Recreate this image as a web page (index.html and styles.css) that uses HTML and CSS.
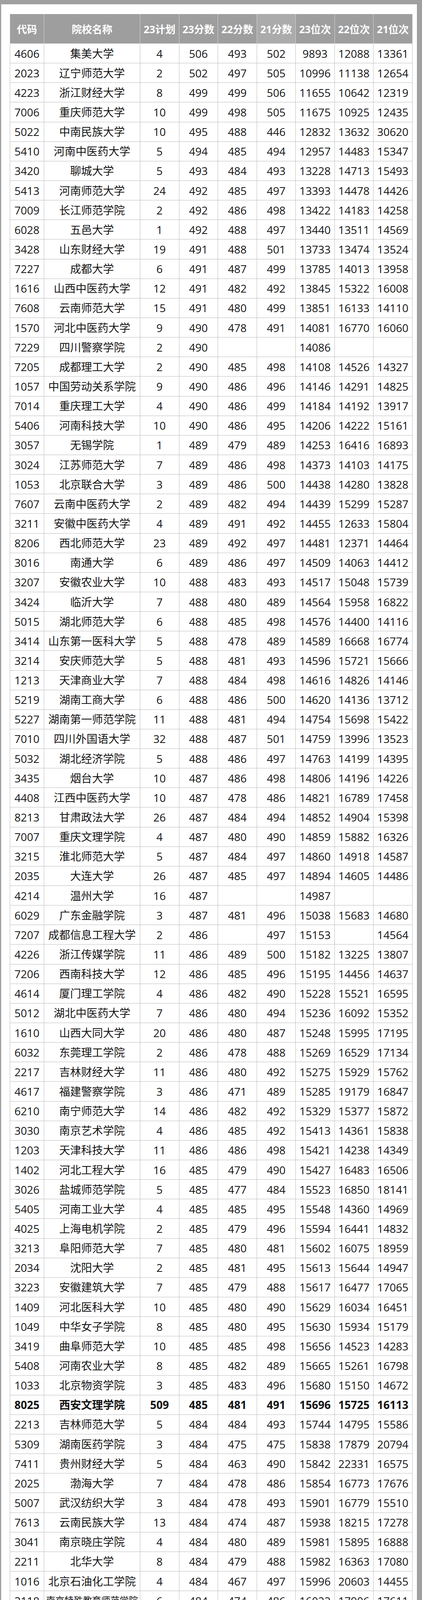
FILE: index.html
```html
<!DOCTYPE html>
<html lang="zh-CN">
<head>
<meta charset="utf-8">
<title>院校分数位次</title>
<link rel="stylesheet" href="styles.css">
</head>
<body>
<div class="sheet">
<table class="rank">
<colgroup>
<col class="c-code"><col class="c-name"><col class="c-num"><col class="c-num"><col class="c-num"><col class="c-num"><col class="c-num"><col class="c-num"><col class="c-num">
</colgroup>
<thead>
<tr><th>代码</th><th>院校名称</th><th>23计划</th><th>23分数</th><th>22分数</th><th class="alt">21分数</th><th>23位次</th><th>22位次</th><th>21位次</th></tr>
</thead>
<tbody>
<tr><td>4606</td><td>集美大学</td><td>4</td><td>506</td><td>493</td><td>502</td><td>9893</td><td>12088</td><td>13361</td></tr>
<tr><td>2023</td><td>辽宁师范大学</td><td>2</td><td>502</td><td>497</td><td>505</td><td>10996</td><td>11138</td><td>12654</td></tr>
<tr><td>4223</td><td>浙江财经大学</td><td>8</td><td>499</td><td>499</td><td>506</td><td>11655</td><td>10642</td><td>12319</td></tr>
<tr><td>7006</td><td>重庆师范大学</td><td>10</td><td>499</td><td>498</td><td>505</td><td>11675</td><td>10925</td><td>12435</td></tr>
<tr><td>5022</td><td>中南民族大学</td><td>10</td><td>495</td><td>488</td><td>446</td><td>12832</td><td>13632</td><td>30620</td></tr>
<tr><td>5410</td><td>河南中医药大学</td><td>5</td><td>494</td><td>485</td><td>494</td><td>12957</td><td>14483</td><td>15347</td></tr>
<tr><td>3420</td><td>聊城大学</td><td>5</td><td>493</td><td>484</td><td>493</td><td>13228</td><td>14713</td><td>15493</td></tr>
<tr><td>5413</td><td>河南师范大学</td><td>24</td><td>492</td><td>485</td><td>497</td><td>13393</td><td>14478</td><td>14426</td></tr>
<tr><td>7009</td><td>长江师范学院</td><td>2</td><td>492</td><td>486</td><td>498</td><td>13422</td><td>14183</td><td>14258</td></tr>
<tr><td>6028</td><td>五邑大学</td><td>1</td><td>492</td><td>488</td><td>497</td><td>13440</td><td>13511</td><td>14569</td></tr>
<tr><td>3428</td><td>山东财经大学</td><td>19</td><td>491</td><td>488</td><td>501</td><td>13733</td><td>13474</td><td>13524</td></tr>
<tr><td>7227</td><td>成都大学</td><td>6</td><td>491</td><td>487</td><td>499</td><td>13785</td><td>14013</td><td>13958</td></tr>
<tr><td>1616</td><td>山西中医药大学</td><td>12</td><td>491</td><td>482</td><td>492</td><td>13845</td><td>15322</td><td>16008</td></tr>
<tr><td>7608</td><td>云南师范大学</td><td>15</td><td>491</td><td>480</td><td>499</td><td>13851</td><td>16133</td><td>14110</td></tr>
<tr><td>1570</td><td>河北中医药大学</td><td>9</td><td>490</td><td>478</td><td>491</td><td>14081</td><td>16770</td><td>16060</td></tr>
<tr><td>7229</td><td>四川警察学院</td><td>2</td><td>490</td><td></td><td></td><td>14086</td><td></td><td></td></tr>
<tr><td>7205</td><td>成都理工大学</td><td>2</td><td>490</td><td>485</td><td>498</td><td>14108</td><td>14526</td><td>14327</td></tr>
<tr><td>1057</td><td>中国劳动关系学院</td><td>9</td><td>490</td><td>486</td><td>496</td><td>14146</td><td>14291</td><td>14825</td></tr>
<tr><td>7014</td><td>重庆理工大学</td><td>4</td><td>490</td><td>486</td><td>499</td><td>14184</td><td>14192</td><td>13917</td></tr>
<tr><td>5406</td><td>河南科技大学</td><td>10</td><td>490</td><td>486</td><td>495</td><td>14206</td><td>14222</td><td>15161</td></tr>
<tr><td>3057</td><td>无锡学院</td><td>1</td><td>489</td><td>479</td><td>489</td><td>14253</td><td>16416</td><td>16893</td></tr>
<tr><td>3024</td><td>江苏师范大学</td><td>7</td><td>489</td><td>486</td><td>498</td><td>14373</td><td>14103</td><td>14175</td></tr>
<tr><td>1053</td><td>北京联合大学</td><td>3</td><td>489</td><td>486</td><td>500</td><td>14438</td><td>14280</td><td>13828</td></tr>
<tr><td>7607</td><td>云南中医药大学</td><td>2</td><td>489</td><td>482</td><td>494</td><td>14439</td><td>15299</td><td>15287</td></tr>
<tr><td>3211</td><td>安徽中医药大学</td><td>4</td><td>489</td><td>491</td><td>492</td><td>14455</td><td>12633</td><td>15804</td></tr>
<tr><td>8206</td><td>西北师范大学</td><td>23</td><td>489</td><td>492</td><td>497</td><td>14481</td><td>12371</td><td>14464</td></tr>
<tr><td>3016</td><td>南通大学</td><td>6</td><td>489</td><td>486</td><td>497</td><td>14509</td><td>14063</td><td>14412</td></tr>
<tr><td>3207</td><td>安徽农业大学</td><td>10</td><td>488</td><td>483</td><td>493</td><td>14517</td><td>15048</td><td>15739</td></tr>
<tr><td>3424</td><td>临沂大学</td><td>7</td><td>488</td><td>480</td><td>489</td><td>14564</td><td>15958</td><td>16822</td></tr>
<tr><td>5015</td><td>湖北师范大学</td><td>6</td><td>488</td><td>485</td><td>498</td><td>14576</td><td>14400</td><td>14116</td></tr>
<tr><td>3414</td><td>山东第一医科大学</td><td>5</td><td>488</td><td>478</td><td>489</td><td>14589</td><td>16668</td><td>16774</td></tr>
<tr><td>3214</td><td>安庆师范大学</td><td>5</td><td>488</td><td>481</td><td>493</td><td>14596</td><td>15721</td><td>15666</td></tr>
<tr><td>1213</td><td>天津商业大学</td><td>7</td><td>488</td><td>484</td><td>498</td><td>14616</td><td>14826</td><td>14146</td></tr>
<tr><td>5219</td><td>湖南工商大学</td><td>6</td><td>488</td><td>486</td><td>500</td><td>14620</td><td>14136</td><td>13712</td></tr>
<tr><td>5227</td><td>湖南第一师范学院</td><td>11</td><td>488</td><td>481</td><td>494</td><td>14754</td><td>15698</td><td>15422</td></tr>
<tr><td>7010</td><td>四川外国语大学</td><td>32</td><td>488</td><td>487</td><td>501</td><td>14759</td><td>13996</td><td>13523</td></tr>
<tr><td>5032</td><td>湖北经济学院</td><td>5</td><td>488</td><td>486</td><td>497</td><td>14763</td><td>14199</td><td>14395</td></tr>
<tr><td>3435</td><td>烟台大学</td><td>10</td><td>487</td><td>486</td><td>498</td><td>14806</td><td>14196</td><td>14226</td></tr>
<tr><td>4408</td><td>江西中医药大学</td><td>10</td><td>487</td><td>478</td><td>486</td><td>14821</td><td>16789</td><td>17458</td></tr>
<tr><td>8213</td><td>甘肃政法大学</td><td>26</td><td>487</td><td>484</td><td>494</td><td>14852</td><td>14904</td><td>15398</td></tr>
<tr><td>7007</td><td>重庆文理学院</td><td>4</td><td>487</td><td>480</td><td>490</td><td>14859</td><td>15882</td><td>16326</td></tr>
<tr><td>3215</td><td>淮北师范大学</td><td>5</td><td>487</td><td>484</td><td>497</td><td>14860</td><td>14918</td><td>14587</td></tr>
<tr><td>2035</td><td>大连大学</td><td>26</td><td>487</td><td>485</td><td>497</td><td>14894</td><td>14605</td><td>14486</td></tr>
<tr><td>4214</td><td>温州大学</td><td>16</td><td>487</td><td></td><td></td><td>14987</td><td></td><td></td></tr>
<tr><td>6029</td><td>广东金融学院</td><td>3</td><td>487</td><td>481</td><td>496</td><td>15038</td><td>15683</td><td>14680</td></tr>
<tr><td>7207</td><td>成都信息工程大学</td><td>2</td><td>486</td><td></td><td>497</td><td>15153</td><td></td><td>14564</td></tr>
<tr><td>4226</td><td>浙江传媒学院</td><td>11</td><td>486</td><td>489</td><td>500</td><td>15182</td><td>13225</td><td>13807</td></tr>
<tr><td>7206</td><td>西南科技大学</td><td>12</td><td>486</td><td>485</td><td>496</td><td>15195</td><td>14456</td><td>14637</td></tr>
<tr><td>4614</td><td>厦门理工学院</td><td>4</td><td>486</td><td>482</td><td>490</td><td>15228</td><td>15521</td><td>16595</td></tr>
<tr><td>5012</td><td>湖北中医药大学</td><td>7</td><td>486</td><td>480</td><td>494</td><td>15236</td><td>16092</td><td>15352</td></tr>
<tr><td>1610</td><td>山西大同大学</td><td>20</td><td>486</td><td>480</td><td>487</td><td>15248</td><td>15995</td><td>17195</td></tr>
<tr><td>6032</td><td>东莞理工学院</td><td>2</td><td>486</td><td>478</td><td>488</td><td>15269</td><td>16529</td><td>17134</td></tr>
<tr><td>2217</td><td>吉林财经大学</td><td>11</td><td>486</td><td>480</td><td>492</td><td>15275</td><td>15929</td><td>15762</td></tr>
<tr><td>4617</td><td>福建警察学院</td><td>3</td><td>486</td><td>471</td><td>489</td><td>15285</td><td>19179</td><td>16847</td></tr>
<tr><td>6210</td><td>南宁师范大学</td><td>14</td><td>486</td><td>482</td><td>492</td><td>15329</td><td>15377</td><td>15872</td></tr>
<tr><td>3030</td><td>南京艺术学院</td><td>4</td><td>486</td><td>485</td><td>492</td><td>15413</td><td>14361</td><td>15838</td></tr>
<tr><td>1203</td><td>天津科技大学</td><td>11</td><td>486</td><td>486</td><td>498</td><td>15421</td><td>14238</td><td>14349</td></tr>
<tr><td>1402</td><td>河北工程大学</td><td>16</td><td>485</td><td>479</td><td>490</td><td>15427</td><td>16483</td><td>16506</td></tr>
<tr><td>3026</td><td>盐城师范学院</td><td>5</td><td>485</td><td>477</td><td>484</td><td>15523</td><td>16850</td><td>18141</td></tr>
<tr><td>5405</td><td>河南工业大学</td><td>4</td><td>485</td><td>485</td><td>495</td><td>15548</td><td>14360</td><td>14969</td></tr>
<tr><td>4025</td><td>上海电机学院</td><td>2</td><td>485</td><td>479</td><td>496</td><td>15594</td><td>16441</td><td>14832</td></tr>
<tr><td>3213</td><td>阜阳师范大学</td><td>7</td><td>485</td><td>480</td><td>481</td><td>15602</td><td>16075</td><td>18959</td></tr>
<tr><td>2034</td><td>沈阳大学</td><td>2</td><td>485</td><td>481</td><td>495</td><td>15613</td><td>15644</td><td>14947</td></tr>
<tr><td>3223</td><td>安徽建筑大学</td><td>7</td><td>485</td><td>479</td><td>488</td><td>15617</td><td>16477</td><td>17065</td></tr>
<tr><td>1409</td><td>河北医科大学</td><td>10</td><td>485</td><td>480</td><td>490</td><td>15629</td><td>16034</td><td>16451</td></tr>
<tr><td>1049</td><td>中华女子学院</td><td>8</td><td>485</td><td>480</td><td>495</td><td>15630</td><td>15934</td><td>15179</td></tr>
<tr><td>3419</td><td>曲阜师范大学</td><td>10</td><td>485</td><td>485</td><td>498</td><td>15656</td><td>14523</td><td>14283</td></tr>
<tr><td>5408</td><td>河南农业大学</td><td>8</td><td>485</td><td>482</td><td>489</td><td>15665</td><td>15261</td><td>16798</td></tr>
<tr><td>1033</td><td>北京物资学院</td><td>3</td><td>485</td><td>483</td><td>496</td><td>15680</td><td>15150</td><td>14672</td></tr>
<tr class="hl"><td>8025</td><td>西安文理学院</td><td>509</td><td>485</td><td>481</td><td>491</td><td>15696</td><td>15725</td><td>16113</td></tr>
<tr><td>2213</td><td>吉林师范大学</td><td>5</td><td>484</td><td>484</td><td>493</td><td>15744</td><td>14795</td><td>15586</td></tr>
<tr><td>5309</td><td>湖南医药学院</td><td>3</td><td>484</td><td>475</td><td>475</td><td>15838</td><td>17879</td><td>20794</td></tr>
<tr><td>7411</td><td>贵州财经大学</td><td>5</td><td>484</td><td>463</td><td>490</td><td>15842</td><td>22331</td><td>16575</td></tr>
<tr><td>2025</td><td>渤海大学</td><td>7</td><td>484</td><td>478</td><td>486</td><td>15854</td><td>16773</td><td>17676</td></tr>
<tr><td>5007</td><td>武汉纺织大学</td><td>3</td><td>484</td><td>478</td><td>493</td><td>15901</td><td>16779</td><td>15510</td></tr>
<tr><td>7613</td><td>云南民族大学</td><td>13</td><td>484</td><td>474</td><td>487</td><td>15938</td><td>18215</td><td>17278</td></tr>
<tr><td>3041</td><td>南京晓庄学院</td><td>4</td><td>484</td><td>480</td><td>489</td><td>15981</td><td>15895</td><td>16888</td></tr>
<tr><td>2211</td><td>北华大学</td><td>8</td><td>484</td><td>479</td><td>488</td><td>15982</td><td>16363</td><td>17080</td></tr>
<tr><td>1016</td><td>北京石油化工学院</td><td>4</td><td>484</td><td>467</td><td>497</td><td>15996</td><td>20603</td><td>14455</td></tr>
<tr><td>3118</td><td class="small">南京特殊教育师范学院</td><td>6</td><td>484</td><td>474</td><td>486</td><td>16022</td><td>17906</td><td>17611</td></tr>
<tr><td>7245</td><td>成都师范学院</td><td>10</td><td>483</td><td>481</td><td>495</td><td>16091</td><td>15703</td><td>15181</td></tr>
<tr><td>5017</td><td>湖北民族大学</td><td>6</td><td>483</td><td>476</td><td>486</td><td>16166</td><td>17276</td><td>17506</td></tr>
<tr><td>3411</td><td>山东农业大学</td><td>2</td><td>483</td><td>477</td><td>490</td><td>16180</td><td>17126</td><td>16554</td></tr>
<tr><td>1602</td><td>太原科技大学</td><td>16</td><td>483</td><td>480</td><td>486</td><td>16208</td><td>16179</td><td>17698</td></tr>
<tr><td>3455</td><td>山东政法学院</td><td>12</td><td>483</td><td>480</td><td>495</td><td>16241</td><td>15917</td><td>14958</td></tr>
<tr><td>4245</td><td>嘉兴南湖学院</td><td>1</td><td>482</td><td></td><td>486</td><td>16387</td><td></td><td>17576</td></tr>
<tr><td>4212</td><td>绍兴文理学院</td><td>8</td><td>482</td><td>477</td><td>489</td><td>16404</td><td>17020</td><td>16776</td></tr>
<tr><td>4406</td><td>景德镇陶瓷大学</td><td>3</td><td>482</td><td>475</td><td>485</td><td>16406</td><td>17819</td><td>18016</td></tr>
<tr><td>6207</td><td>广西中医药大学</td><td>4</td><td>482</td><td>478</td><td>486</td><td>16410</td><td>16726</td><td>17482</td></tr>
<tr><td>6214</td><td>广西民族大学</td><td>13</td><td>482</td><td>477</td><td>486</td><td>16464</td><td>17114</td><td>17599</td></tr>
<tr><td>7611</td><td>云南财经大学</td><td>21</td><td>482</td><td>481</td><td>493</td><td>16535</td><td>15715</td><td>15567</td></tr>
<tr><td>7219</td><td>内江师范学院</td><td>4</td><td>482</td><td>477</td><td>480</td><td>16570</td><td>17065</td><td>19289</td></tr>
<tr><td>1430</td><td>河北经贸大学</td><td>46</td><td>482</td><td>483</td><td>494</td><td>16607</td><td>15136</td><td>15406</td></tr>
<tr><td>4427</td><td>南昌医学院</td><td>6</td><td>482</td><td>476</td><td>490</td><td>16613</td><td>17308</td><td>16423</td></tr>
<tr><td>3439</td><td>山东工商学院</td><td>9</td><td>481</td><td>474</td><td>482</td><td>16650</td><td>18205</td><td>18673</td></tr>
<tr><td>8205</td><td>甘肃中医药大学</td><td>11</td><td>481</td><td>473</td><td>485</td><td>16672</td><td>18477</td><td>17899</td></tr>
<tr><td>3436</td><td>潍坊学院</td><td>6</td><td>481</td><td>473</td><td>480</td><td>16673</td><td>18472</td><td>19292</td></tr>
<tr><td>1405</td><td>华北理工大学</td><td>29</td><td>481</td><td>480</td><td>491</td><td>16744</td><td>15903</td><td>16044</td></tr>
<tr><td>4404</td><td>南昌航空大学</td><td>10</td><td>481</td><td>481</td><td>494</td><td>16757</td><td>15550</td><td>15274</td></tr>
<tr><td>7801</td><td>西藏大学</td><td>32</td><td>481</td><td>475</td><td>485</td><td>16778</td><td>17710</td><td>17819</td></tr>
<tr><td>7803</td><td>西藏民族大学</td><td>55</td><td>481</td><td>478</td><td>485</td><td>16797</td><td>16729</td><td>17770</td></tr>
<tr><td>7604</td><td>西南林业大学</td><td>14</td><td>481</td><td>477</td><td>487</td><td>16804</td><td>16977</td><td>17357</td></tr>
<tr><td>3410</td><td>山东理工大学</td><td>14</td><td>481</td><td>481</td><td>490</td><td>16839</td><td>15609</td><td>16417</td></tr>
<tr><td>3031</td><td>苏州科技大学</td><td>11</td><td>481</td><td>485</td><td>498</td><td>16841</td><td>14431</td><td>14329</td></tr>
<tr><td>1019</td><td>北京农学院</td><td>2</td><td>481</td><td></td><td></td><td>16844</td><td></td><td></td></tr>
<tr><td>3039</td><td>南京工程学院</td><td>4</td><td>481</td><td>477</td><td>489</td><td>16938</td><td>16887</td><td>16809</td></tr>
<tr><td>1211</td><td class="small">天津职业技术师范大学</td><td>3</td><td>481</td><td>477</td><td>485</td><td>16942</td><td>16907</td><td>17779</td></tr>
<tr><td>5422</td><td class="small">郑州航空工业管理学院</td><td>21</td><td>481</td><td>471</td><td>485</td><td>16957</td><td>19210</td><td>17753</td></tr>
<tr><td>5305</td><td>湖南财政经济学院</td><td>6</td><td>481</td><td>477</td><td>489</td><td>16960</td><td>16835</td><td>16620</td></tr>
<tr><td>6217</td><td>广西财经学院</td><td>5</td><td>481</td><td>475</td><td>484</td><td>16962</td><td>17782</td><td>18243</td></tr>
<tr><td>9397</td><td>山西医科大学</td><td>3</td><td>480</td><td></td><td></td><td>17098</td><td></td><td></td></tr>
<tr><td>7403</td><td>遵义医科大学</td><td>3</td><td>480</td><td>472</td><td>486</td><td>17113</td><td>18688</td><td>17721</td></tr>
<tr><td>7213</td><td>西南医科大学</td><td>10</td><td>480</td><td></td><td></td><td>17135</td><td></td><td></td></tr>
</tbody>
</table>
</div>
</body>
</html>
```

FILE: styles.css
```css
html, body {
  margin: 0;
  padding: 0;
}

body {
  background: #a0a0a0;
  font-family: "Open Sans", "Noto Sans CJK SC", sans-serif;
  color: #141414;
}

.sheet {
  margin: 11px 13px 0 3px;
  padding: 25px 0 0 22px;
  background: #ffffff;
}

.rank {
  border-collapse: collapse;
  table-layout: fixed;
  width: 1029px;
}

.c-code { width: 87px; }
.c-name { width: 246px; }
.c-num { width: 99.5px; }

.rank th,
.rank td {
  border: 1px solid #bcbcbc;
  text-align: center;
  vertical-align: middle;
  padding: 0;
  white-space: nowrap;
  overflow: hidden;
}

.rank thead tr {
  height: 75px;
}

.rank thead th {
  background: #9e9e9e;
  color: #ffffff;
  font-size: 26px;
  font-weight: 700;
  border-color: #d6d6d6;
  border-top-color: #9e9e9e;
}

.rank thead th.alt {
  background: #ababab;
}

.rank tbody tr {
  height: 50.15px;
}

.rank td {
  font-size: 28px;
  line-height: 1;
}

.rank tr.hl td {
  font-weight: 700;
}

.rank td.small {
  font-size: 23.5px;
}
```
